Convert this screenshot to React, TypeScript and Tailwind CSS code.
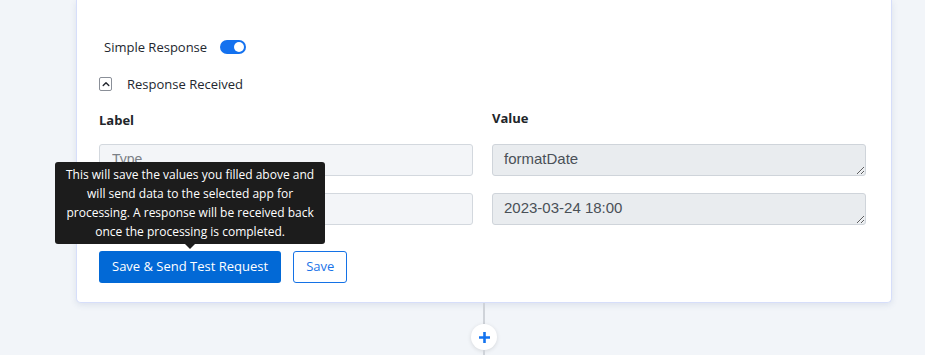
import { useState } from 'react';

const ui = { fontFamily: '"Open Sans", "Noto Sans", sans-serif' };
const mono = { fontFamily: '"Liberation Sans", Arial, sans-serif' };

interface Row {
  label: string;
  value: string;
}

const rows: Row[] = [
  { label: 'Type', value: 'formatDate' },
  { label: 'Result', value: '2023-03-24 18:00' },
];

function Toggle({ on }: { on: boolean }) {
  return (
    <span
      className={
        'inline-flex h-[14px] w-[26px] items-center rounded-full px-[2px] ' +
        (on ? 'justify-end bg-[#1371ef]' : 'justify-start bg-gray-300')
      }
    >
      <span className="h-[10px] w-[10px] rounded-full bg-white" />
    </span>
  );
}

export default function App() {
  const [simple] = useState(true);

  return (
    <div className="min-h-[355px] w-full bg-[#f2f5f9] pl-[76px] pr-[33px]" style={ui}>
      <div className="rounded-b-[5px] border-x border-b border-[#d6defa] bg-white pb-[19px] pl-[22px] pr-[25px] pt-[37px] shadow-[0_2px_6px_rgba(60,80,140,0.12)]">
        <div className="flex items-center gap-[13px] pl-[5px] text-[13px] leading-[20px] text-[#23272f]">
          <span>Simple Response</span>
          <Toggle on={simple} />
        </div>

        <div className="mt-[17px] flex items-center gap-[15px] text-[13px] leading-[20px] text-[#23272f]">
          <span className="flex h-[14px] w-[13px] items-center justify-center rounded-[2px] border border-[#8a8f98]">
            <svg width="8" height="6" viewBox="0 0 8 6" fill="none">
              <path d="M1.2 4.5 4 1.7l2.8 2.8" stroke="#23272f" strokeWidth="1.4" strokeLinecap="round" strokeLinejoin="round" />
            </svg>
          </span>
          <span>Response Received</span>
        </div>

        <div className="mt-[16px] grid grid-cols-2 gap-x-[19px]">
          <div className="text-[13px] font-bold leading-[20px] text-[#212529]">Label</div>
          <div className="-mt-[2px] text-[13px] font-bold leading-[20px] text-[#212529]">Value</div>
        </div>

        <div className="mt-[14px] flex flex-col gap-[17px]">
          {rows.map((r) => (
            <div key={r.label} className="grid grid-cols-2 gap-x-[19px]">
              <input
                readOnly
                placeholder={r.label}
                className="h-[32px] w-full rounded-[3px] border border-[#d3d8de] bg-[#f3f5f8] px-[12px] pb-[3px] text-[14px] text-[#495057] outline-none placeholder:text-[#7a7f86]"
                style={mono}
              />
              <textarea
                readOnly
                value={r.value}
                rows={1}
                className="block h-[32px] w-full resize-y rounded-[3px] border border-[#cfd4da] bg-[#e9ecef] px-[11px] py-[3px] text-[15px] leading-[22px] text-[#495057] outline-none"
                style={mono}
              />
            </div>
          ))}
        </div>

        <div className="mt-[26px] flex items-center gap-[12px]">
          <div className="relative">
            <button className="h-[32px] rounded-[3px] bg-[#0269d6] px-[13px] text-[13px] text-white">
              Save &amp; Send Test Request
            </button>
            <div className="absolute bottom-[39px] left-1/2 w-[270px] -translate-x-1/2 rounded-[3px] bg-[#1c1c1c] px-[8px] py-[3px] text-center text-[12px] leading-[19px] text-white">
              This will save the values you filled above and will send data to the selected app for processing. A response will be received back once the processing is completed.
              <span className="absolute -bottom-[5px] left-1/2 h-0 w-0 -translate-x-1/2 border-x-[5px] border-t-[5px] border-x-transparent border-t-[#1c1c1c]" />
            </div>
          </div>
          <button className="h-[32px] rounded-[3px] border border-[#1472e6] bg-white px-[12px] text-[13px] text-[#1a73e8]">
            Save
          </button>
        </div>
      </div>

      <div className="flex flex-col items-center">
        <div className="h-[21px] w-[2px] bg-[#cfd3d9]" />
        <button className="flex h-[26px] w-[26px] items-center justify-center rounded-full bg-white shadow-[0_1px_4px_rgba(0,0,0,0.12)]">
          <svg width="13" height="13" viewBox="0 0 13 13">
            <path d="M6.5 1v11M1 6.5h11" stroke="#1373ef" strokeWidth="2.6" />
          </svg>
        </button>
        <div className="h-[10px] w-[2px] bg-[#cfd3d9]" />
      </div>
    </div>
  );
}
